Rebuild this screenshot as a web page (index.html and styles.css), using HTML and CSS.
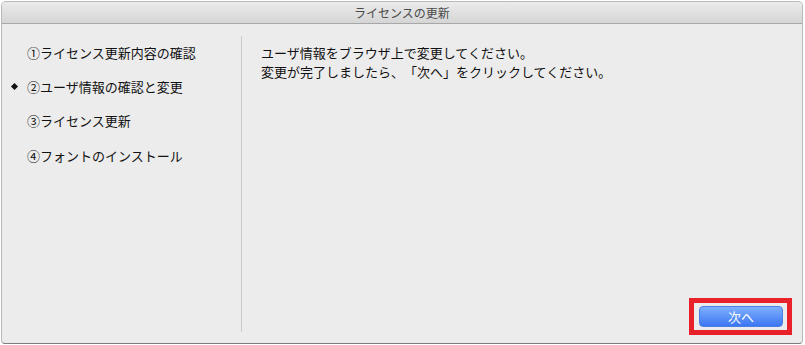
FILE: index.html
```html
<!DOCTYPE html>
<html lang="ja">
<head>
    <meta charset="UTF-8">
    <title>ライセンスの更新</title>
    <link rel="stylesheet" href="styles.css">
</head>
<body>
<div class="window">
    <div class="titlebar">ライセンスの更新</div>
    <div class="content">
        <ul class="steps">
            <li><span class="mark"></span>①ライセンス更新内容の確認</li>
            <li class="current"><span class="mark"></span>②ユーザ情報の確認と変更</li>
            <li><span class="mark"></span>③ライセンス更新</li>
            <li><span class="mark"></span>④フォントのインストール</li>
        </ul>
        <div class="panel">
            <p class="message">ユーザ情報をブラウザ上で変更してください。<br>変更が完了しましたら、「次へ」をクリックしてください。</p>
            <div class="actions">
                <div class="highlight">
                    <button class="next">次へ</button>
                </div>
            </div>
        </div>
    </div>
</div>
</body>
</html>
```

FILE: styles.css
```css
html, body{
    margin: 0;
    padding: 0;
    background: #ffffff;
}
body{
    font-family: "Noto Sans CJK JP", "Noto Sans", sans-serif;
    font-size: 13px;
    color: #111111;
    text-spacing-trim: space-all;
}
.window{
    margin: 1px 2px 0 1px;
    height: 341px;
    border: 1px solid #b9b9b9;
    border-bottom-color: #7d7d7d;
    border-radius: 5px 5px 4px 4px;
    background: #ececec;
    display: flex;
    flex-direction: column;
    overflow: hidden;
}
.titlebar{
    height: 21px;
    line-height: 21px;
    text-align: center;
    font-size: 12px;
    color: #4a4a4a;
    background: linear-gradient(#ebebeb, #d5d5d5);
    border-bottom: 1px solid #a8a8a8;
}
.content{
    flex: 1;
    display: flex;
    padding: 12px 0 11px 0;
}
.steps{
    list-style: none;
    margin: 0;
    padding: 0;
    width: 239px;
    border-right: 1px solid #c9c9c9;
}
.steps li{
    display: flex;
    align-items: center;
    height: 34.4px;
}
.steps li:first-child{
    margin-top: -1px;
}
.steps .mark{
    width: 25px;
    display: flex;
    justify-content: center;
}
.steps .current .mark::before{
    content: "";
    width: 5px;
    height: 5px;
    background: #111;
    transform: rotate(45deg);
    margin-left: -1px;
}
.panel{
    flex: 1;
    display: flex;
    flex-direction: column;
    padding: 0 10px 0 19px;
}
.message{
    margin: 7px 0 0 0;
    line-height: 19px;
    flex: 1;
}
.actions{
    display: flex;
    justify-content: flex-end;
    margin-bottom: -3px;
}
.highlight{
    border: 5px solid #e8212a;
    padding: 3px 4px 3px 5px;
}
.next{
    display: block;
    width: 84px;
    height: 21px;
    border: 1px solid #4a7fe6;
    border-radius: 4px;
    background: linear-gradient(#7eb0fb, #3c76f4);
    color: #ffffff;
    font-family: "Noto Sans CJK JP", sans-serif;
    font-size: 13px;
    line-height: 17px;
    padding: 0;
}
```
